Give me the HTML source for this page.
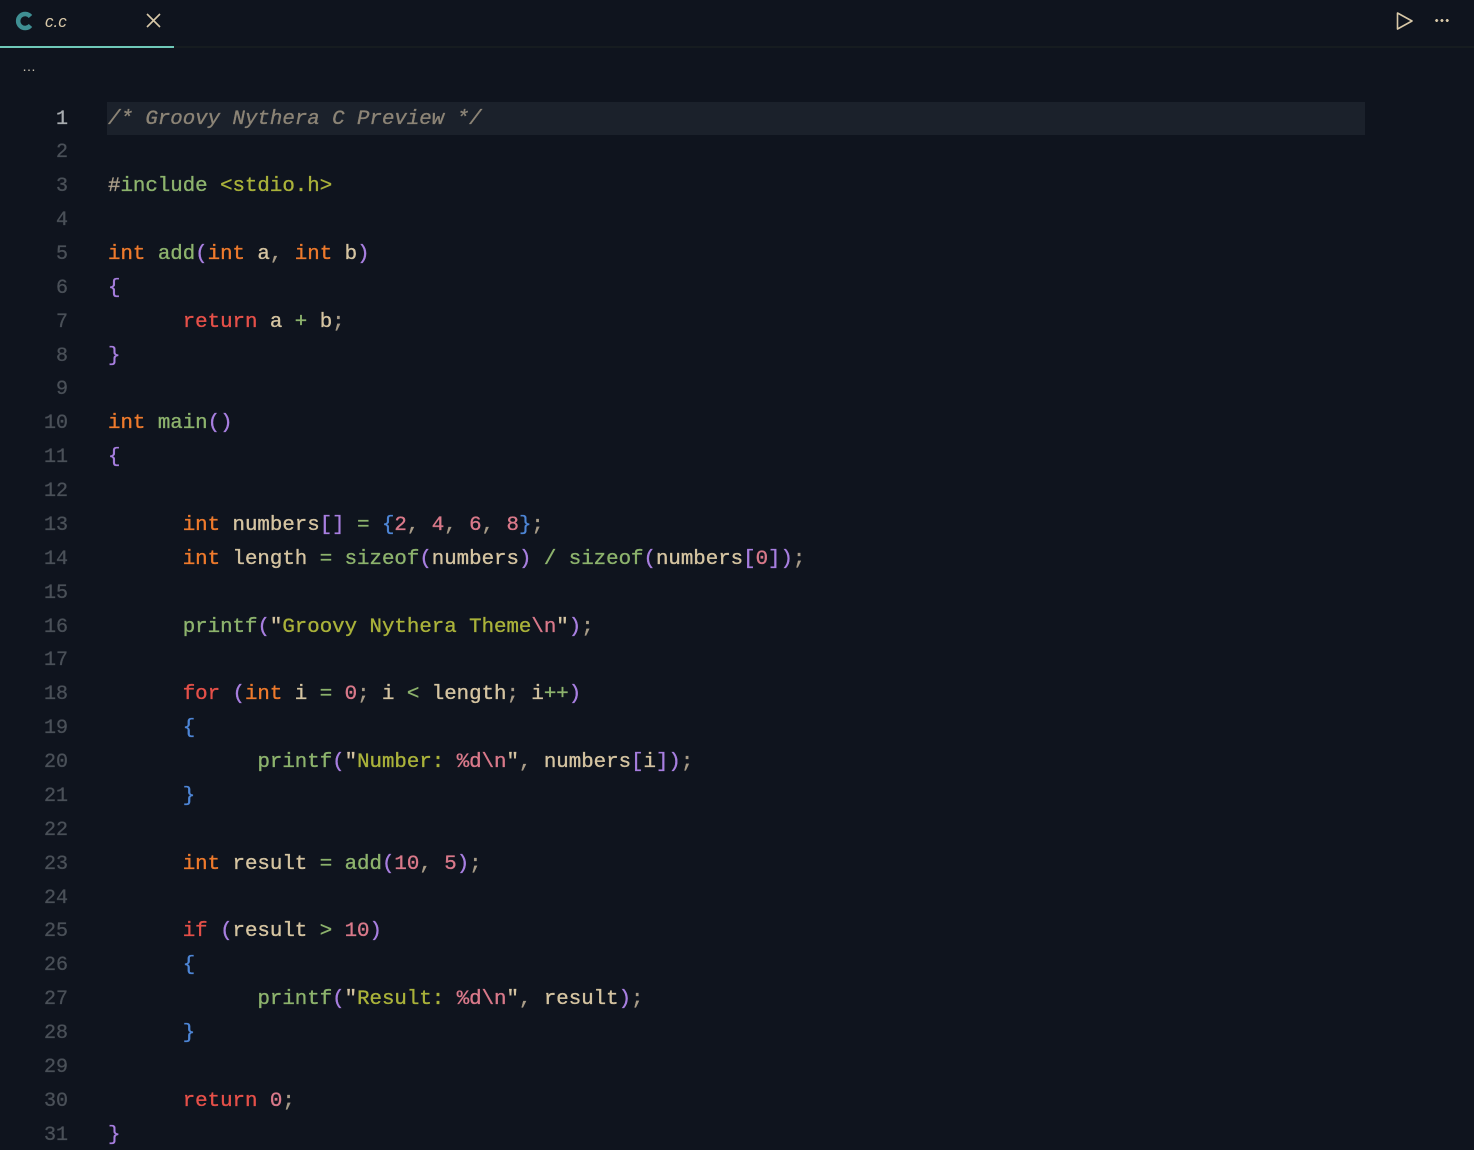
<!DOCTYPE html>
<html><head><meta charset="utf-8"><style>
html,body{margin:0;padding:0;background:#0f141e;width:1474px;height:1150px;overflow:hidden}
body{position:relative;font-family:"Liberation Mono",monospace}
.tabbar{position:absolute;left:0;top:0;width:1474px;height:46px;border-bottom:2px solid #161c20}
.tab{position:absolute;left:0;top:0;width:174px;height:46px;border-bottom:2px solid #6fc9b9}
.ln{position:absolute;left:0;width:68px;text-align:right;color:#4a5058;font-size:20px;-webkit-text-stroke:0.3px currentColor}
.code{position:absolute;left:108px;font-size:20.75px;white-space:pre;color:#d5c4a1;-webkit-text-stroke:0.35px currentColor}
.row{position:absolute;height:34px;line-height:34px}
.k{color:#ee7a2c}.r{color:#e55049}.f{color:#8db36d}.s{color:#aab23a}.n{color:#d9798a}
.p{color:#a87fe0}.b{color:#4e86d6}.o{color:#8db36d}.c{color:#8c8476;font-style:italic}.pu{color:#a89c88}
</style></head><body>
<div class="tabbar"></div>
<div class="tab">
<svg style="position:absolute;left:15px;top:11px" width="20" height="20" viewBox="0 0 20 20"><path d="M15.5 5.5 A7 7 0 1 0 15.5 14.5" fill="none" stroke="#3f8f93" stroke-width="4.5"/></svg>
<span style="position:absolute;left:45px;top:12px;font-family:'Liberation Sans',sans-serif;font-style:italic;font-size:17px;color:#d8c8a8">c.c</span>
<svg style="position:absolute;left:146px;top:13px" width="15" height="15" viewBox="0 0 15 15"><path d="M1 1L14 14M14 1L1 14" stroke="#d8c8a8" stroke-width="1.6"/></svg>
</div>
<svg style="position:absolute;left:1395px;top:11px" width="20" height="20" viewBox="0 0 20 20"><path d="M2.5 2 L17 10 L2.5 18 Z" fill="none" stroke="#d8c8a8" stroke-width="1.6" stroke-linejoin="round"/></svg>
<div style="position:absolute;left:1434px;top:19px;width:16px;height:3px;background:radial-gradient(circle,#d8c8a8 1.4px,transparent 1.6px) 0 0/5.3px 3px repeat-x"></div>
<div style="position:absolute;left:22px;top:58px;color:#c8c0b0;font-size:14px;font-family:'Liberation Sans',sans-serif">…</div>
<div style="position:absolute;left:107px;top:102px;width:1258px;height:33px;background:#1b212b"></div>
<script>
const L=[
'<span class="c">/* Groovy Nythera C Preview */</span>',
'',
'<span class="pu">#</span><span class="f">include</span> <span class="s">&lt;stdio.h&gt;</span>',
'',
'<span class="k">int</span> <span class="f">add</span><span class="p">(</span><span class="k">int</span> a<span class="pu">,</span> <span class="k">int</span> b<span class="p">)</span>',
'<span class="p">{</span>',
'      <span class="r">return</span> a <span class="o">+</span> b<span class="pu">;</span>',
'<span class="p">}</span>',
'',
'<span class="k">int</span> <span class="f">main</span><span class="p">()</span>',
'<span class="p">{</span>',
'',
'      <span class="k">int</span> numbers<span class="p">[]</span> <span class="o">=</span> <span class="b">{</span><span class="n">2</span><span class="pu">,</span> <span class="n">4</span><span class="pu">,</span> <span class="n">6</span><span class="pu">,</span> <span class="n">8</span><span class="b">}</span><span class="pu">;</span>',
'      <span class="k">int</span> length <span class="o">=</span> <span class="f">sizeof</span><span class="p">(</span>numbers<span class="p">)</span> <span class="o">/</span> <span class="f">sizeof</span><span class="p">(</span>numbers<span class="p">[</span><span class="n">0</span><span class="p">])</span><span class="pu">;</span>',
'',
'      <span class="f">printf</span><span class="p">(</span>"<span class="s">Groovy Nythera Theme</span><span class="n">\\n</span>"<span class="p">)</span><span class="pu">;</span>',
'',
'      <span class="r">for</span> <span class="p">(</span><span class="k">int</span> i <span class="o">=</span> <span class="n">0</span><span class="pu">;</span> i <span class="o">&lt;</span> length<span class="pu">;</span> i<span class="o">++</span><span class="p">)</span>',
'      <span class="b">{</span>',
'            <span class="f">printf</span><span class="p">(</span>"<span class="s">Number: </span><span class="n">%d\\n</span>"<span class="pu">,</span> numbers<span class="p">[</span>i<span class="p">])</span><span class="pu">;</span>',
'      <span class="b">}</span>',
'',
'      <span class="k">int</span> result <span class="o">=</span> <span class="f">add</span><span class="p">(</span><span class="n">10</span><span class="pu">,</span> <span class="n">5</span><span class="p">)</span><span class="pu">;</span>',
'',
'      <span class="r">if</span> <span class="p">(</span>result <span class="o">&gt;</span> <span class="n">10</span><span class="p">)</span>',
'      <span class="b">{</span>',
'            <span class="f">printf</span><span class="p">(</span>"<span class="s">Result: </span><span class="n">%d\\n</span>"<span class="pu">,</span> result<span class="p">)</span><span class="pu">;</span>',
'      <span class="b">}</span>',
'',
'      <span class="r">return</span> <span class="n">0</span><span class="pu">;</span>',
'<span class="p">}</span>'];
let h='';
L.forEach((t,i)=>{const y=102.5+i*33.87;
h+=`<div class="row ln" style="top:${y}px;${i==0?'color:#a8acb0':''}">${i+1}</div><div class="row code" style="top:${y}px">${t}</div>`;});
document.body.insertAdjacentHTML('beforeend',h);
</script>
</body></html>
